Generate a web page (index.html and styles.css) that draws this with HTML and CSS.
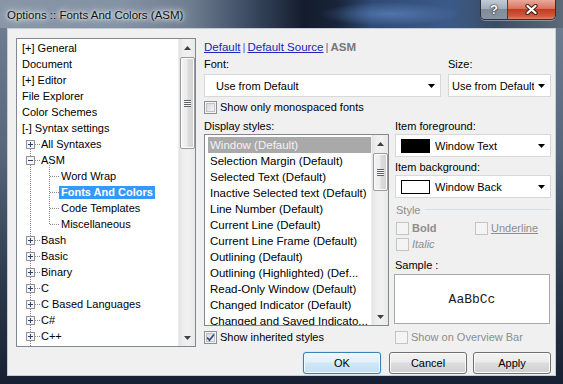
FILE: index.html
```html
<!DOCTYPE html>
<html>
<head>
<meta charset="utf-8">
<title>Options :: Fonts And Colors (ASM)</title>
<link rel="stylesheet" href="styles.css">
</head>
<body>
<div class="window">
  <div class="titlebar">
    <div class="title">Options :: Fonts And Colors (ASM)</div>
    <div class="caption-btns">
      <div class="cbtn help">?</div>
      <div class="cbtn close">
        <svg width="13" height="11" viewBox="0 0 13 11"><path d="M2.5 2 L10.5 9 M10.5 2 L2.5 9" stroke="#3b1c14" stroke-width="4.2" stroke-linecap="round"/><path d="M2.5 2 L10.5 9 M10.5 2 L2.5 9" stroke="#ffffff" stroke-width="2.3" stroke-linecap="round"/></svg>
      </div>
    </div>
  </div>

  <div class="client">
    <div class="main">
      <div class="tree">
        <div class="tree-items">
          <div class="ti l0">[+] General</div>
          <div class="ti l0">Document</div>
          <div class="ti l0">[+] Editor</div>
          <div class="ti l0">File Explorer</div>
          <div class="ti l0">Color Schemes</div>
          <div class="ti l0">[-] Syntax settings</div>
          <div class="ti l1"><svg class="exp" width="9" height="9" viewBox="0 0 9 9"><rect x="0.5" y="0.5" width="8" height="8" fill="#f6f6f6" stroke="#929292"/><path d="M2 4.5h5M4.5 2v5" stroke="#2a4186"/></svg><span>All Syntaxes</span></div>
          <div class="ti l1"><svg class="exp" width="9" height="9" viewBox="0 0 9 9"><rect x="0.5" y="0.5" width="8" height="8" fill="#f6f6f6" stroke="#929292"/><path d="M2 4.5h5" stroke="#2a4186"/></svg><span>ASM</span></div>
          <div class="ti l2"><span class="lbl2">Word Wrap</span></div>
          <div class="ti l2"><span class="lbl2 sel">Fonts And Colors</span></div>
          <div class="ti l2"><span class="lbl2">Code Templates</span></div>
          <div class="ti l2"><span class="lbl2">Miscellaneous</span></div>
          <div class="ti l1"><svg class="exp" width="9" height="9" viewBox="0 0 9 9"><rect x="0.5" y="0.5" width="8" height="8" fill="#f6f6f6" stroke="#929292"/><path d="M2 4.5h5M4.5 2v5" stroke="#2a4186"/></svg><span>Bash</span></div>
          <div class="ti l1"><svg class="exp" width="9" height="9" viewBox="0 0 9 9"><rect x="0.5" y="0.5" width="8" height="8" fill="#f6f6f6" stroke="#929292"/><path d="M2 4.5h5M4.5 2v5" stroke="#2a4186"/></svg><span>Basic</span></div>
          <div class="ti l1"><svg class="exp" width="9" height="9" viewBox="0 0 9 9"><rect x="0.5" y="0.5" width="8" height="8" fill="#f6f6f6" stroke="#929292"/><path d="M2 4.5h5M4.5 2v5" stroke="#2a4186"/></svg><span>Binary</span></div>
          <div class="ti l1"><svg class="exp" width="9" height="9" viewBox="0 0 9 9"><rect x="0.5" y="0.5" width="8" height="8" fill="#f6f6f6" stroke="#929292"/><path d="M2 4.5h5M4.5 2v5" stroke="#2a4186"/></svg><span>C</span></div>
          <div class="ti l1"><svg class="exp" width="9" height="9" viewBox="0 0 9 9"><rect x="0.5" y="0.5" width="8" height="8" fill="#f6f6f6" stroke="#929292"/><path d="M2 4.5h5M4.5 2v5" stroke="#2a4186"/></svg><span>C Based Languages</span></div>
          <div class="ti l1"><svg class="exp" width="9" height="9" viewBox="0 0 9 9"><rect x="0.5" y="0.5" width="8" height="8" fill="#f6f6f6" stroke="#929292"/><path d="M2 4.5h5M4.5 2v5" stroke="#2a4186"/></svg><span>C#</span></div>
          <div class="ti l1"><svg class="exp" width="9" height="9" viewBox="0 0 9 9"><rect x="0.5" y="0.5" width="8" height="8" fill="#f6f6f6" stroke="#929292"/><path d="M2 4.5h5M4.5 2v5" stroke="#2a4186"/></svg><span>C++</span></div>
          <svg class="tree-lines" width="161" height="307" viewBox="0 0 161 307">
            <g stroke="#8c8c8c" stroke-dasharray="1 1" fill="none">
              <path d="M13.5 110V117M13.5 126V197M13.5 206V213M13.5 222V229M13.5 238V245M13.5 254V261M13.5 270V277M13.5 286V293M13.5 302V307"/>
              <path d="M18 105.5H23M18 121.5H23M18 201.5H23M18 217.5H23M18 233.5H23M18 249.5H23M18 265.5H23M18 281.5H23M18 297.5H23"/>
              <path d="M32.5 126V186"/>
              <path d="M33 137.5H42M33 153.5H42M33 169.5H42M33 185.5H42"/>
            </g>
          </svg>
        </div>
        <div class="vscroll">
          <div class="sb-btn"><svg width="7" height="4" viewBox="0 0 7 4"><path d="M0 4H7L3.5 0Z" fill="#3f3f3f"/></svg></div>
          <div class="sb-track">
            <div class="thumb tree-thumb"><div class="grip"></div></div>
          </div>
          <div class="sb-btn"><svg width="7" height="4" viewBox="0 0 7 4"><path d="M0 0H7L3.5 4Z" fill="#3f3f3f"/></svg></div>
        </div>
      </div>

      <div class="pane">
        <div class="links">
          <span class="link">Default</span><span class="sep">|</span><span class="link">Default Source</span><span class="sep">|</span><span class="cur">ASM</span>
        </div>

        <div class="row2">
          <div class="field">
            <div class="flabel">Font:</div>
            <div class="combo font-combo"><span class="ctext">Use from Default</span><svg class="arrow" width="7" height="4" viewBox="0 0 7 4"><path d="M0 0H7L3.5 4Z" fill="#000"/></svg></div>
          </div>
          <div class="field">
            <div class="flabel">Size:</div>
            <div class="combo size-combo"><span class="ctext">Use from Default</span><svg class="arrow" width="7" height="4" viewBox="0 0 7 4"><path d="M0 0H7L3.5 4Z" fill="#000"/></svg></div>
          </div>
        </div>

        <div class="chk-row mono">
          <span class="cb"></span><span>Show only monospaced fonts</span>
        </div>

        <div class="cols">
          <div class="lcol">
            <div class="clabel">Display styles:</div>
            <div class="listbox">
              <div class="items">
                <div class="item sel">Window (Default)</div>
                <div class="item">Selection Margin (Default)</div>
                <div class="item">Selected Text (Default)</div>
                <div class="item">Inactive Selected text (Default)</div>
                <div class="item">Line Number (Default)</div>
                <div class="item">Current Line (Default)</div>
                <div class="item">Current Line Frame (Default)</div>
                <div class="item">Outlining (Default)</div>
                <div class="item">Outlining (Highlighted) (Def...</div>
                <div class="item">Read-Only Window (Default)</div>
                <div class="item">Changed Indicator (Default)</div>
                <div class="item">Changed and Saved Indicato...</div>
              </div>
              <div class="vscroll">
                <div class="sb-btn"><svg width="7" height="4" viewBox="0 0 7 4"><path d="M0 4H7L3.5 0Z" fill="#3f3f3f"/></svg></div>
                <div class="sb-track">
                  <div class="thumb list-thumb"><div class="grip"></div></div>
                </div>
                <div class="sb-btn"><svg width="7" height="4" viewBox="0 0 7 4"><path d="M0 0H7L3.5 4Z" fill="#3f3f3f"/></svg></div>
              </div>
            </div>
            <div class="chk-row inherit">
              <span class="cb checked"><svg width="11" height="11" viewBox="0 0 11 11"><path d="M2 5.5L4.5 8.2L9 2.5" stroke="#3a4a8e" stroke-width="1.8" fill="none"/></svg></span><span>Show inherited styles</span>
            </div>
          </div>

          <div class="rcol">
            <div class="clabel">Item foreground:</div>
            <div class="combo color-combo"><span class="swatch black"></span><span class="ctext">Window Text</span><svg class="arrow" width="7" height="4" viewBox="0 0 7 4"><path d="M0 0H7L3.5 4Z" fill="#000"/></svg></div>
            <div class="clabel bg-label">Item background:</div>
            <div class="combo color-combo"><span class="swatch white"></span><span class="ctext">Window Back</span><svg class="arrow" width="7" height="4" viewBox="0 0 7 4"><path d="M0 0H7L3.5 4Z" fill="#000"/></svg></div>

            <div class="group-title"><span>Style</span><span class="gline"></span></div>
            <div class="style-row first">
              <div class="opt wide"><span class="cb dis"></span><span class="dis-text bold">Bold</span></div>
              <div class="opt"><span class="cb dis"></span><span class="dis-text under">Underline</span></div>
            </div>
            <div class="style-row">
              <div class="opt wide"><span class="cb dis"></span><span class="dis-text ital">Italic</span></div>
            </div>

            <div class="clabel sample-label">Sample :</div>
            <div class="sample">AaBbCc</div>

            <div class="chk-row overview">
              <span class="cb dis"></span><span class="dis-text">Show on Overview Bar</span>
            </div>
          </div>
        </div>
      </div>
    </div>

    <div class="buttons">
      <div class="btn default">OK</div>
      <div class="btn cancel">Cancel</div>
      <div class="btn apply">Apply</div>
    </div>
  </div>
</div>
</body>
</html>
```

FILE: styles.css
```css
* { box-sizing: border-box; }
html, body { margin: 0; padding: 0; }
body {
  width: 563px;
  height: 384px;
  overflow: hidden;
  font-family: "Liberation Sans", Arial, sans-serif;
  font-size: 11px;
  color: #000;
  background: #1b2434;
}

.window {
  width: 563px;
  height: 384px;
  display: flex;
  flex-direction: column;
  background: linear-gradient(180deg, #728194 0%, #56657a 40%, #2b384b 75%, #172032 100%);
}

/* title bar */
.titlebar {
  height: 28px;
  flex: none;
  display: flex;
  align-items: flex-start;
  padding-left: 7px;
  background:
    radial-gradient(ellipse 70px 12px at 390px 14px, rgba(92,130,190,0.75), rgba(92,130,190,0) 100%),
    linear-gradient(90deg, #8896a7 0%, #8291a3 22%, #6d7c8f 34%, #334259 46%, #131c2c 54%, #18243a 60%, #2f4a74 66%, #3c5a88 80%, #3a4c66 88%, #5d6978 100%);
}
.title {
  margin-top: 7px;
  font-size: 11.5px;
  line-height: 16px;
  color: #101010;
  text-shadow: 0 0 6px rgba(255,255,255,0.95), 0 0 12px rgba(255,255,255,0.8), 0 0 3px #fff;
  white-space: nowrap;
}
.caption-btns {
  margin-left: auto;
  margin-right: 7px;
  display: flex;
  height: 20px;
  border: 1px solid #2a3240;
  border-top: none;
  border-radius: 0 0 5px 5px;
  overflow: hidden;
  box-shadow: 0 1px 0 rgba(255,255,255,0.35);
}
.cbtn {
  height: 19px;
  display: flex;
  align-items: center;
  justify-content: center;
}
.cbtn.help {
  width: 27px;
  border-right: 1px solid #3a4250;
  background: linear-gradient(180deg, #c2cbd5 0%, #a3aeba 45%, #7f8c9b 50%, #8894a2 100%);
  color: #fff;
  font-weight: bold;
  font-size: 13px;
  text-shadow: 0 0 2px #1a1a1a, 0 0 1px #000;
}
.cbtn.close {
  width: 47px;
  background: linear-gradient(180deg, #e9a99b 0%, #d8725d 45%, #c23b22 50%, #cf5a3d 85%, #e0836a 100%);
}

/* client area */
.client {
  flex: 1;
  margin: 0 7px 8px 7px;
  background: #f0f0f0;
  border: 1px solid #c5ccd5;
  padding: 9px 4px 0 8px;
  display: flex;
  flex-direction: column;
}
.main {
  display: flex;
  gap: 8px;
  height: 309px;
  flex: none;
}

/* tree */
.tree {
  width: 180px;
  height: 309px;
  border: 1px solid #828790;
  background: #fff;
  display: flex;
  flex: none;
}
.tree-items {
  position: relative;
  flex: 1;
  padding-top: 1px;
  overflow: hidden;
}
.tree-lines {
  position: absolute;
  left: 0;
  top: 0;
}
.ti {
  height: 16px;
  line-height: 16px;
  display: flex;
  align-items: flex-start;
  white-space: nowrap;
}
.l0 { padding-left: 5px; }
.l1 { padding-left: 9px; }
.l1 .exp { flex: none; margin: 4px 6px 0 0; display: block; }
.l2 { padding-left: 42px; }
.lbl2 { padding: 0 2px; }
.lbl2.sel {
  background: #3399ff;
  color: #fff;
  font-weight: bold;
  line-height: 13px;
  height: 13px;
  margin-top: 2px;
}

/* scrollbars */
.vscroll {
  width: 17px;
  flex: none;
  display: flex;
  flex-direction: column;
  background: linear-gradient(90deg, #e3e3e3 0%, #eeeeee 25%, #f1f1f1 60%, #e8e8e8 100%);
  border-left: 1px solid #ececec;
}
.sb-btn {
  height: 17px;
  flex: none;
  display: flex;
  align-items: center;
  justify-content: center;
}
.sb-track {
  flex: 1;
  display: flex;
  flex-direction: column;
  align-items: center;
}
.thumb {
  width: 15px;
  border: 1px solid #999b9e;
  border-radius: 2px;
  background: linear-gradient(90deg, #f4f4f4 0%, #ececec 45%, #dcdcdc 55%, #d2d2d2 100%);
  box-shadow: inset 0 0 0 1px #fbfbfb;
  display: flex;
  align-items: center;
  justify-content: center;
}
.tree-thumb { margin-top: 1px; height: 92px; }
.list-thumb { margin-top: 1px; height: 38px; }
.grip {
  width: 7px;
  height: 7px;
  background: repeating-linear-gradient(180deg, #5f6266 0px, #5f6266 1px, #f6f6f6 1px, #f6f6f6 2px);
}

/* right pane */
.pane {
  flex: 1;
  display: flex;
  flex-direction: column;
}
.links {
  margin-top: 1px;
  height: 16px;
  line-height: 16px;
  display: flex;
  font-size: 11.5px;
  white-space: nowrap;
}
.link { color: #2424b4; text-decoration: underline; }
.sep { color: #5a6c94; margin: 0 2px 0 2px; }
.cur { color: #777; font-weight: bold; }

.row2 {
  display: flex;
  gap: 7px;
  margin-top: 1px;
}
.field { display: flex; flex-direction: column; }
.flabel { height: 16px; line-height: 16px; margin-bottom: 2px; }

.combo {
  height: 23px;
  border: 1px solid #d8d8d8;
  background: #fff;
  display: flex;
  align-items: center;
  white-space: nowrap;
}
.ctext { flex: 1; overflow: hidden; }
.combo .arrow { flex: none; margin: 1px 5px 0 4px; }
.font-combo { width: 237px; padding-left: 11px; }
.size-combo { width: 103px; padding-left: 3px; }
.color-combo { width: 156px; padding-left: 5px; }
.swatch {
  width: 29px;
  height: 14px;
  flex: none;
  margin-right: 5px;
  border: 1px solid #000;
}
.swatch.black { background: #000; }
.swatch.white { background: #fff; }

.chk-row {
  height: 16px;
  display: flex;
  align-items: center;
  gap: 3px;
  white-space: nowrap;
}
.chk-row.mono { margin-top: 2px; }
.chk-row.inherit { margin-top: 3px; }
.chk-row.overview { margin-top: 5px; }

.cb {
  width: 13px;
  height: 13px;
  flex: none;
  border: 1px solid #8e8f8f;
  background: linear-gradient(135deg, #cdd0d5 0%, #e6e7e9 50%, #f7f7f7 100%);
  box-shadow: inset 0 0 0 1px #f4f4f4, inset 0 0 0 2px #bfc2c6;
  display: flex;
  align-items: center;
  justify-content: center;
}
.cb.checked svg { display: block; }
.cb.dis {
  border-color: #c4c4c4;
  background: #f4f4f4;
  box-shadow: none;
}
.dis-text { color: #8d8d8d; }
.dis-text.bold { font-weight: bold; }
.dis-text.under { text-decoration: underline; }
.dis-text.ital { font-style: italic; }

.cols {
  display: flex;
  gap: 6px;
  margin-top: 4px;
}
.lcol { width: 185px; display: flex; flex-direction: column; }
.rcol { width: 156px; display: flex; flex-direction: column; }
.clabel { height: 15px; line-height: 15px; white-space: nowrap; }
.bg-label { margin-top: 3px; }

.listbox {
  height: 192px;
  border: 1px solid #828790;
  background: #fff;
  display: flex;
}
.listbox .vscroll { border-left: 1px solid #f0f0f0; }
.items {
  flex: 1;
  padding: 2px 0 0 3px;
  overflow: hidden;
}
.item {
  height: 16px;
  line-height: 16px;
  padding-left: 2px;
  white-space: nowrap;
  overflow: hidden;
  font-size: 11.5px;
}
.item.sel { background: #a9a9a9; color: #f3f3f3; }

.group-title {
  margin-top: 4px;
  height: 15px;
  display: flex;
  align-items: center;
  color: #8d8d8d;
  padding-left: 1px;
}
.gline {
  flex: 1;
  height: 0;
  border-top: 1px solid #d5dfe5;
  margin-left: 5px;
  margin-top: -1px;
}
.style-row {
  height: 16px;
  display: flex;
  align-items: center;
  padding-left: 1px;
}
.style-row.first { margin-top: 3px; }
.opt { display: flex; align-items: center; gap: 3px; }
.opt.wide { width: 79px; }

.sample-label { margin-top: 5px; height: 16px; line-height: 16px; }
.sample {
  margin-top: 1px;
  height: 50px;
  width: 156px;
  margin-left: -1px;
  border: 1px solid #a8a8a8;
  background: #fff;
  display: flex;
  align-items: center;
  justify-content: center;
  font-family: "Liberation Mono", "Courier New", monospace;
  font-size: 13px;
  color: #1a1a1a;
}

/* dialog buttons */
.buttons {
  margin-top: 5px;
  display: flex;
  justify-content: flex-end;
}
.btn {
  width: 78px;
  height: 22px;
  border: 1px solid #707070;
  border-radius: 3px;
  background: linear-gradient(180deg, #f2f2f2 0%, #ebebeb 45%, #dddddd 50%, #cfcfcf 100%);
  box-shadow: inset 0 0 0 1px #fbfbfb;
  display: flex;
  align-items: center;
  justify-content: center;
  font-size: 11px;
}
.btn.default {
  border-color: #3c7fb1;
  background: linear-gradient(180deg, #eef7fd 0%, #e1f0fb 45%, #cfe7f8 50%, #c3e0f6 100%);
  box-shadow: inset 0 0 0 1px #f4fbff, 0 0 1px #5ea8e0;
}
.btn.cancel { margin-left: 8px; }
.btn.apply { margin-left: 6px; }
```
